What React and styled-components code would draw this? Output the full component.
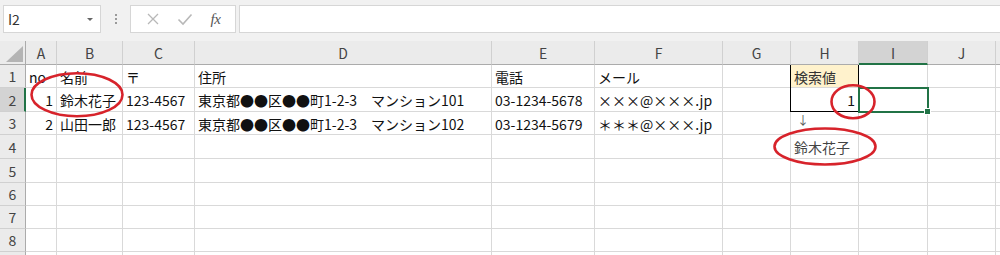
import React from 'react';
import styled, { createGlobalStyle } from 'styled-components';

const Global = createGlobalStyle`
  html, body { margin: 0; padding: 0; background: #fff; }
  body {
    font-family: "Noto Sans CJK JP", "Noto Sans", sans-serif;
    width: 1000px;
    height: 255px;
    overflow: hidden;
  }
`;

const Page = styled.div`
  width: 1000px;
  height: 255px;
  overflow: hidden;
  background: #fff;
`;

const Toolbar = styled.div`
  height: 41px;
  box-sizing: border-box;
  background: #f1f1f1;
  display: flex;
  align-items: flex-start;
  padding: 5px 0 0 3px;
`;

const NameBox = styled.div`
  width: 98px;
  height: 28px;
  box-sizing: border-box;
  background: #fff;
  border: 1px solid #d6d6d6;
  display: flex;
  align-items: center;
  justify-content: space-between;
  padding: 0 7px 0 4px;
  font-size: 14px;
  color: #333;
`;

const Caret = styled.span`
  width: 0;
  height: 0;
  border-left: 3px solid transparent;
  border-right: 3px solid transparent;
  border-top: 3px solid #666;
`;

const Grip = styled.div`
  width: 29px;
  height: 28px;
  display: flex;
  flex-direction: column;
  align-items: center;
  justify-content: center;
  gap: 2px;
`;

const GripDot = styled.span`
  width: 2px;
  height: 2px;
  background: #9a9a9a;
`;

const FxBox = styled.div`
  width: 106px;
  height: 28px;
  box-sizing: border-box;
  background: #fff;
  border: 1px solid #d6d6d6;
  display: flex;
  align-items: center;
  justify-content: space-around;
  padding: 0 6px 0 6px;
`;

const FxLabel = styled.span`
  font-family: "Liberation Serif", "DejaVu Serif", serif;
  font-style: italic;
  font-size: 15px;
  color: #555;
  letter-spacing: -0.5px;
`;

const FormulaInput = styled.div`
  flex: 1;
  height: 28px;
  margin-left: 3px;
  box-sizing: border-box;
  background: #fff;
  border: 1px solid #d6d6d6;
  border-right: none;
`;

const Sheet = styled.div`
  position: relative;
  display: grid;
  grid-template-columns: 26px 31px 66px 72px 297px 103px 128px 68px 68px 69px 68px 1fr;
  grid-template-rows: 24px 23px 24px 23px 24px 24px 23px 23px 23px 10px;
  font-size: 14px;
`;

const Corner = styled.div`
  position: relative;
  background: #ebebeb;
  box-sizing: border-box;
  border-right: 1px solid #ababab;
  border-bottom: 1px solid #ababab;
  display: flex;
  align-items: flex-end;
  justify-content: flex-end;
  padding: 0 2px 2px 0;
`;

const ColHead = styled.div`
  box-sizing: border-box;
  background: ${p => (p.$selected ? '#d3d3d3' : '#ebebeb')};
  border-right: 1px solid #d0d0d0;
  border-bottom: ${p => (p.$selected ? '2px solid #217346' : '1px solid #ababab')};
  display: flex;
  align-items: center;
  justify-content: center;
  color: #444;
  padding-top: ${p => (p.$selected ? '1px' : '0')};
`;

const RowHead = styled.div`
  box-sizing: border-box;
  overflow: hidden;
  background: ${p => (p.$selected ? '#d3d3d3' : '#ebebeb')};
  border-bottom: 1px solid #d0d0d0;
  border-right: ${p => (p.$selected ? '2px solid #217346' : '1px solid #ababab')};
  display: flex;
  align-items: center;
  justify-content: center;
  color: #444;
  padding-left: ${p => (p.$selected ? '1px' : '0')};
`;

const Cell = styled.div`
  position: relative;
  box-sizing: border-box;
  background: ${p => p.$fill || '#fff'};
  border-right: 1px solid ${p => (p.$boxed ? '#000' : '#d9d9d9')};
  border-bottom: 1px solid ${p => (p.$boxBottom ? '#000' : '#d9d9d9')};
  box-shadow: ${p => (p.$boxed ? '-1px 0 0 #000' : 'none')};
  z-index: ${p => (p.$boxed || p.$active ? 1 : 0)};
  display: flex;
  align-items: ${p => (p.$top ? 'flex-start' : 'center')};
  justify-content: ${p => (p.$right ? 'flex-end' : 'flex-start')};
  padding: 1px 3px 0 ${p => (p.$top ? '6px' : '3px')};
  white-space: nowrap;
  color: ${p => p.$ink || '#111'};
  font-size: ${p => (p.$small ? '12px' : '14px')};
  line-height: ${p => (p.$small ? '14px' : 'normal')};

  ${p => p.$active && `
    outline: 2px solid #217346;
    outline-offset: -1px;
    &::after {
      content: "";
      position: absolute;
      right: -4px;
      bottom: -4px;
      width: 5px;
      height: 5px;
      background: #217346;
      border: 1px solid #fff;
    }
  `}
`;

const Marks = styled.svg`
  position: absolute;
  left: 0;
  top: 0;
  width: 1000px;
  height: 214px;
  pointer-events: none;
  z-index: 5;
`;

const cols = ['A', 'B', 'C', 'D', 'E', 'F', 'G', 'H', 'I', 'J', ''];

const rows = [
  { A: 'no', B: '名前', C: '〒', D: '住所', E: '電話', F: 'メール', H: '検索値' },
  {
    A: '1', B: '鈴木花子', C: '123-4567', D: '東京都●●区●●町1-2-3　マンション101',
    E: '03-1234-5678', F: '×××@×××.jp', H: '1',
  },
  {
    A: '2', B: '山田一郎', C: '123-4567', D: '東京都●●区●●町1-2-3　マンション102',
    E: '03-1234-5679', F: '＊＊＊@×××.jp', H: '↓',
  },
  { H: '鈴木花子' },
  {}, {}, {}, {}, {},
];

function cellProps(r, c) {
  const p = {};
  if (c === 'A' && (r === 1 || r === 2)) p.$right = true;
  if (c === 'H') {
    if (r === 0) { p.$fill = '#fff2cc'; p.$boxed = true; p.$ink = '#333'; }
    if (r === 1) { p.$boxed = true; p.$boxBottom = true; p.$right = true; }
    if (r === 2) { p.$ink = '#555'; p.$small = true; p.$top = true; }
    if (r === 3) { p.$ink = '#444'; }
  }
  if (c === 'I' && r === 1) p.$active = true;
  return p;
}

export default function App() {
  return (
    <Page>
      <Global />
      <Toolbar>
        <NameBox>
          <span>I2</span>
          <Caret />
        </NameBox>
        <Grip>
          <GripDot />
          <GripDot />
          <GripDot />
        </Grip>
        <FxBox>
          <svg width="14" height="14" viewBox="0 0 14 14">
            <path d="M2 2 L12 12 M12 2 L2 12" stroke="#b8b8b8" strokeWidth="1.3" fill="none" />
          </svg>
          <svg width="16" height="14" viewBox="0 0 16 14">
            <path d="M1.5 7.5 L6 12 L14.5 2.5" stroke="#b8b8b8" strokeWidth="1.6" fill="none" />
          </svg>
          <FxLabel>fx</FxLabel>
        </FxBox>
        <FormulaInput />
      </Toolbar>
      <Sheet>
        <Corner>
          <svg width="17" height="16" viewBox="0 0 17 16">
            <path d="M17 0 L17 16 L0 16 Z" fill="#b4b4b4" />
          </svg>
        </Corner>
        {cols.map((c, i) => (
          <ColHead key={'h' + i} $selected={c === 'I'}>{c}</ColHead>
        ))}
        {rows.map((row, r) => (
          <React.Fragment key={'r' + r}>
            <RowHead $selected={r === 1}>{r < 8 ? r + 1 : ''}</RowHead>
            {cols.map((c, i) => (
              <Cell key={'c' + r + '-' + i} {...cellProps(r, c)}>
                {c ? row[c] || '' : ''}
              </Cell>
            ))}
          </React.Fragment>
        ))}
        <Marks viewBox="0 0 1000 214">
          <g fill="none" stroke="#d7232b" strokeWidth="2.6">
            <ellipse cx="77" cy="53.7" rx="45.5" ry="21.5" />
            <ellipse cx="853" cy="60.7" rx="21.5" ry="16.5" />
            <ellipse cx="825" cy="105.5" rx="50.5" ry="18" />
          </g>
        </Marks>
      </Sheet>
    </Page>
  );
}
